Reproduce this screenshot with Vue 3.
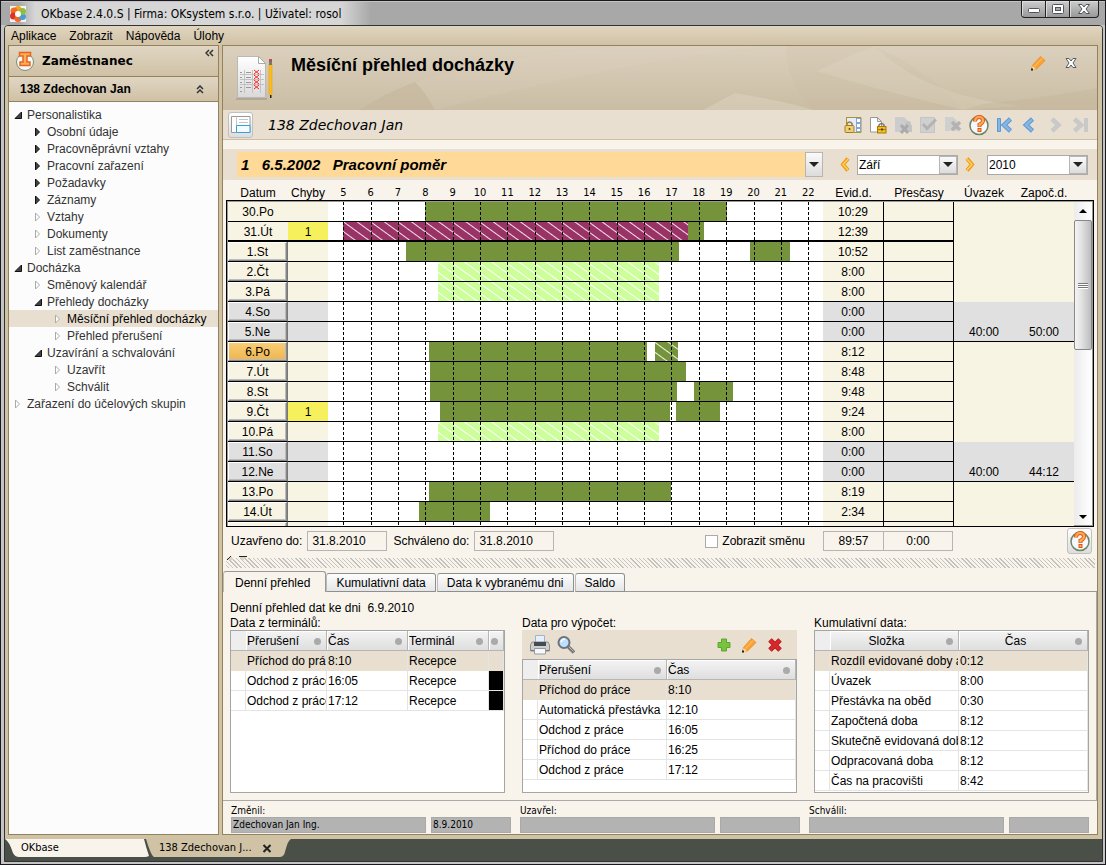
<script setup>
import { ref } from 'vue'

const menu = ['Aplikace', 'Zobrazit', 'Nápověda', 'Úlohy']

const tree = [
  { level: 0, state: 'open', label: 'Personalistika' },
  { level: 1, state: 'closed', label: 'Osobní údaje' },
  { level: 1, state: 'closed', label: 'Pracovněprávní vztahy' },
  { level: 1, state: 'closed', label: 'Pracovní zařazení' },
  { level: 1, state: 'closed', label: 'Požadavky' },
  { level: 1, state: 'closed', label: 'Záznamy' },
  { level: 1, state: 'leaf', label: 'Vztahy' },
  { level: 1, state: 'leaf', label: 'Dokumenty' },
  { level: 1, state: 'leaf', label: 'List zaměstnance' },
  { level: 0, state: 'open', label: 'Docházka' },
  { level: 1, state: 'leaf', label: 'Směnový kalendář' },
  { level: 1, state: 'open', label: 'Přehledy docházky' },
  { level: 2, state: 'leaf', label: 'Měsíční přehled docházky', selected: true },
  { level: 2, state: 'leaf', label: 'Přehled přerušení' },
  { level: 1, state: 'open', label: 'Uzavírání a schvalování' },
  { level: 2, state: 'leaf', label: 'Uzavřít' },
  { level: 2, state: 'leaf', label: 'Schválit' },
  { level: 0, state: 'leaf', label: 'Zařazení do účelových skupin' }
]

const hours = Array.from({ length: 18 }, (_, i) => i + 5)
const DAY_START = 4.44
const DAY_SPAN = 18.1
const at = (h) => ((h - DAY_START) / DAY_SPAN) * 100 + '%'
const span = (a, b) => ({ left: at(a), width: ((b - a) / DAY_SPAN) * 100 + '%' })

const days = [
  { d: '30.Po', t: '10:29', flat: true, bars: [['work', 7.99, 19.03]] },
  { d: '31.Út', t: '12:39', flat: true, err: '1', last: true, bars: [['trip', 5, 17.6], ['work', 17.6, 18.19]] },
  { d: '1.St', t: '10:52', bars: [['work', 7.29, 17.27], ['work', 19.87, 21.33]] },
  { d: '2.Čt', t: '8:00', bars: [['leave', 8.46, 16.54]] },
  { d: '3.Pá', t: '8:00', bars: [['leave', 8.46, 16.54]] },
  { d: '4.So', t: '0:00', off: true, bars: [] },
  { d: '5.Ne', t: '0:00', off: true, sum: ['40:00', '50:00'], bars: [] },
  { d: '6.Po', t: '8:12', current: true, bars: [['work', 8.13, 16.1], ['doctor', 16.4, 17.24]] },
  { d: '7.Út', t: '8:48', bars: [['work', 8.17, 17.53]] },
  { d: '8.St', t: '9:48', bars: [['work', 8.17, 17.2], ['work', 17.82, 19.25]] },
  { d: '9.Čt', t: '9:24', err: '1', bars: [['work', 8.54, 16.95], ['work', 17.16, 18.77]] },
  { d: '10.Pá', t: '8:00', bars: [['leave', 8.46, 16.54]] },
  { d: '11.So', t: '0:00', off: true, bars: [] },
  { d: '12.Ne', t: '0:00', off: true, sum: ['40:00', '44:12'], bars: [] },
  { d: '13.Po', t: '8:19', bars: [['work', 8.13, 16.98]] },
  { d: '14.Út', t: '2:34', bars: [['work', 7.77, 10.36]] },
  { d: '', t: '', bars: [] }
]

const tabs = ['Denní přehled', 'Kumulativní data', 'Data k vybranému dni', 'Saldo']
const activeTab = ref(0)

const terminals = [
  ['Příchod do práce', '8:10', 'Recepce'],
  ['Odchod z práce', '16:05', 'Recepce'],
  ['Odchod z práce', '17:12', 'Recepce']
]
const entries = [
  ['Příchod do práce', '8:10'],
  ['Automatická přestávka', '12:10'],
  ['Odchod z práce', '16:05'],
  ['Příchod do práce', '16:25'],
  ['Odchod z práce', '17:12']
]
const totals = [
  ['Rozdíl evidované doby a úvazku', '0:12'],
  ['Úvazek', '8:00'],
  ['Přestávka na oběd', '0:30'],
  ['Započtená doba', '8:12'],
  ['Skutečně evidovaná doba', '8:12'],
  ['Odpracovaná doba', '8:12'],
  ['Čas na pracovišti', '8:42']
]
const audit = [
  { id: 'changed', label: 'Změnil:', who: 'Zdechovan Jan Ing.', when: '8.9.2010' },
  { id: 'closed', label: 'Uzavřel:', who: '', when: '' },
  { id: 'approved', label: 'Schválil:', who: '', when: '' }
]
const contract = '1\u00a0\u00a0\u00a06.5.2002\u00a0\u00a0\u00a0Pracovní poměr'
</script>

<template>
  <div class="window">
    <header class="titlebar">
      <svg class="logo" width="18" height="18" viewBox="0 0 18 18">
        <rect x="1" y="1" width="16" height="16" fill="#f3f3f3" />
        <circle cx="9" cy="4.500" r="3.500" fill="#f9a01b" />
        <circle cx="5" cy="6" r="3.500" fill="#f26a28" />
        <circle cx="4.500" cy="11" r="3.500" fill="#d9342b" />
        <circle cx="9" cy="13.500" r="3.500" fill="#f26a22" />
        <circle cx="13.500" cy="11.500" r="3.500" fill="#4a9ad4" />
        <circle cx="13.500" cy="6.500" r="3.500" fill="#8cbf3f" />
        <circle cx="9" cy="9" r="3" fill="#fff" />
      </svg>
      <h1>OKbase 2.4.0.S | Firma: OKsystem s.r.o. | Uživatel: rosol</h1>
      <div class="winbtns">
        <button type="button" aria-label="Minimalizovat">
          <svg width="14" height="14" viewBox="0 0 14 14"><rect x="1.5" y="6.5" width="11" height="4" rx="1" fill="#fff" stroke="#50545c" /></svg>
        </button>
        <button type="button" aria-label="Maximalizovat">
          <svg width="14" height="14" viewBox="0 0 14 14"><rect x="1.5" y="2.5" width="11" height="9" rx="1" fill="#fff" stroke="#50545c" /><rect x="4.5" y="5.5" width="5" height="3" fill="#aaa" stroke="#50545c" /></svg>
        </button>
        <button type="button" class="wide" aria-label="Zavřít">
          <svg width="14" height="14" viewBox="0 0 14 14"><path d="M1.5 2.5h3.5l2 2.5 2-2.5h3.500l-3.500 4.500 3.500 4.500h-3.500l-2-2.500-2 2.500h-3.500l3.500-4.500z" fill="#fff" stroke="#50545c" /></svg>
        </button>
      </div>
    </header>

    <div class="client">
      <nav class="menubar"><a v-for="m in menu" :key="m" href="#">{{ m }}</a></nav>

      <div class="workspace">
        <aside class="sidebar">
          <div class="side-head">
            <svg width="20" height="20" viewBox="0 0 20 20">
              <circle cx="10" cy="11" r="8.500" fill="#f4f7fc" stroke="#7b8f6d" />
              <path d="M4.500 1.500h11v3.500h-3.500v6h3v3.500h-10v-3.500h3v-6h-3.500z" fill="#fdb05a" stroke="#e8641c" stroke-width="1.500" />
            </svg>
            <h2>Zaměstnanec</h2>
            <button type="button" aria-label="Skrýt panel">
              <svg width="9" height="8" viewBox="0 0 9 8"><path d="M4 1L1 4l3 3M8 1L5 4l3 3" fill="none" stroke="#333" stroke-width="1.500" /></svg>
            </button>
          </div>
          <div class="side-sub">
            <h3>138 Zdechovan Jan</h3>
            <button type="button" aria-label="Sbalit">
              <svg width="8" height="9" viewBox="0 0 8 9"><path d="M1 4l3-3 3 3M1 8l3-3 3 3" fill="none" stroke="#333" stroke-width="1.500" /></svg>
            </button>
          </div>
          <ul class="tree">
            <li v-for="n in tree" :key="n.label">
              <a href="#" :class="['lvl' + n.level, { selected: n.selected }]">
                <svg width="10" height="10" viewBox="0 0 10 10">
                  <path v-if="n.state === 'open'" d="M1 8.500h6.500v-6.500z" fill="#444" stroke="#111" />
                  <path v-else-if="n.state === 'closed'" d="M1.500 1v8l4-4z" fill="#444" stroke="#111" />
                  <path v-else d="M1.500 1v8l4-4z" fill="#fff" stroke="#aaa" />
                </svg>
                {{ n.label }}
              </a>
            </li>
          </ul>
        </aside>

        <main class="main">
          <div class="banner">
            <svg class="swirl" viewBox="0 0 874 64" preserveAspectRatio="none">
              <path d="M137 64Q160 48 192 36Q204 48 212 64z" fill="#c2b49a" opacity=".45" />
              <path d="M192 36Q300 4 420 0H540Q380 20 212 64Q204 48 192 36z" fill="#e6dac6" opacity=".15" />
              <path d="M564 0Q560 30 590 64H740Q700 20 650 0z" fill="#c2b49a" opacity=".12" />
              <path d="M594 25Q630 8 652 0Q700 50 800 60L740 64Q640 40 594 25z" fill="#e9decb" opacity=".22" />
              <path d="M512 47Q560 55 590 64H480z" fill="#e9decb" opacity=".35" />
              <path d="M760 58Q820 52 874 42V64H740z" fill="#b8a98c" opacity=".2" />
            </svg>
            <svg class="doc" width="38" height="48" viewBox="0 0 38 48">
              <defs><linearGradient id="paper" x1="0" y1="0" x2="0" y2="1"><stop offset="0" stop-color="#fff" /><stop offset="1" stop-color="#d9d9d9" /></linearGradient></defs>
              <path d="M1 44h31v2h-31z" fill="#9c8f78" opacity=".5" />
              <path d="M2.500 2.500h21l7 7v34h-28z" fill="url(#paper)" stroke="#b9b9b9" />
              <path d="M23.500 2.500v7h7z" fill="#fff" stroke="#aaa" />
              <path d="M9.500 16v23M17.500 16v23M25.500 16v23M5 20.500h24M5 25.500h24M5 30.500h24" stroke="#c2c2c2" fill="none" />
              <path d="M5 18.500h2M5 23.500h2M5 28.500h2M5 33.500h2M5 37.500h2M11 18.500h5M11 23.500h5M11 28.500h5M11 33.500h5" stroke="#999" fill="none" />
              <path d="M19 16l5 4M24 16l-5 4M19 21l5 4M24 21l-5 4M19 26l5 4M24 26l-5 4M19 31l5 4M24 31l-5 4" stroke="#f22" fill="none" />
              <path d="M34 10h3v29l-1.500 3-1.500-3z" fill="#fdbd1a" stroke="#e09a10" stroke-width=".5" />
              <path d="M34 8h3v3h-3z" fill="#777" /><path d="M34 5h3v3h-3z" fill="#a55" /><path d="M35 41h1.500v3h-1.500z" fill="#222" />
            </svg>
            <h2>Měsíční přehled docházky</h2>
            <div class="banner-actions">
              <button type="button" aria-label="Upravit">
                <svg width="16" height="16" viewBox="0 0 16 16"><path d="M2.500 10.500L10.500 1.500l4.500 4L6.500 14l-5 1z" fill="#fba233" stroke="#e88a22" stroke-width=".8" /><path d="M4.500 11.500L12 3.500" stroke="#ffc878" /><path d="M2.500 11l3.500 3-4.500 1.500z" fill="#f6d9a8" /><path d="M1 13.500h2v2h-2z" fill="#222" /></svg>
              </button>
              <button type="button" aria-label="Zavřít přehled">
                <svg width="12" height="12" viewBox="0 0 12 12"><path d="M1 1.500h3l2 2.500 2-2.500h3l-3 4.500 3 4.500h-3l-2-2.500-2 2.500h-3l3-4.500z" fill="#fff" stroke="#555b63" /></svg>
              </button>
            </div>
          </div>

          <div class="toolbar">
            <button type="button" class="frame-btn" aria-label="Rozložení">
              <svg width="20" height="18" viewBox="0 0 20 18"><path d="M.5 .5h18.500v16h-18.500z" fill="#fff" stroke="#999" /><path d="M5.500 .5v16M5.500 9.500h14M8 3.500h9M8 6.500h9M8 12.500h9" stroke="#c4c4c4" fill="none" /><path d="M5.500 9.500h13.500v7h-13.500z" fill="#f4faff" stroke="#2ea3dc" /></svg>
            </button>
            <span class="person">138 Zdechovan Jan</span>
            <div class="icons">
              <button type="button" aria-label="Zámek období">
                <svg width="18" height="18" viewBox="0 0 18 18"><path d="M2.500 1v7M2 1.500h15v15h-7" fill="#e4eefb" stroke="#aa9430" /><path d="M12 2h5v14h-5z" fill="#88a4d2" /><path d="M13 3h3v3h-3zM13 8h3v3h-3zM13 13h3v2h-3z" fill="#fff" /><path d="M3 9.500v-2q2.500-3 5 0v2" fill="none" stroke="#9a7d33" stroke-width="1.500" /><rect x="1" y="9.500" width="9" height="7" rx="1" fill="#f0cf74" stroke="#a17c28" /><circle cx="5.500" cy="13" r="1" fill="#6b5012" /></svg>
              </button>
              <button type="button" aria-label="Uzamknout">
                <svg width="18" height="18" viewBox="0 0 18 18"><path d="M1.500 1.500h7l4 4v10.500h-11z" fill="#fff" stroke="#999" /><path d="M8.500 1.500v4h4z" fill="#eee" stroke="#999" /><path d="M10 11V9q2.500-3 5 0v2" fill="none" stroke="#777" stroke-width="1.500" /><rect x="8.500" y="10.500" width="8.500" height="6.500" fill="#f5be17" stroke="#a8780c" /><path d="M9 13.500h8" stroke="#a8780c" /><path d="M12 12.500h2v2h-2z" fill="#444" /></svg>
              </button>
              <button type="button" disabled aria-label="Odemknout">
                <svg width="18" height="18" viewBox="0 0 18 18"><path d="M1 1h9l4 4v11h-13z" fill="#ccc" /><circle cx="14" cy="8" r="3" fill="#c4c4c4" /><rect x="10" y="9" width="8" height="7" fill="#c4c4c4" /><path d="M7 9l7 8M14 9l-7 8" stroke="#aaa" stroke-width="3" /></svg>
              </button>
              <button type="button" disabled aria-label="Schválit">
                <svg width="18" height="18" viewBox="0 0 18 18"><path d="M1.500 1.500h14v15h-14z" fill="#d0d0d0" stroke="#c4c4c4" /><path d="M4 8l4 4.500 9-9" fill="none" stroke="#b3b3b3" stroke-width="3" /></svg>
              </button>
              <button type="button" disabled aria-label="Zrušit schválení">
                <svg width="18" height="18" viewBox="0 0 18 18"><path d="M1 1h8l4 4v10h-12z" fill="#cfcfcf" /><path d="M8 6l8 8M16 6l-8 8" stroke="#b3b3b3" stroke-width="3.500" /></svg>
              </button>
              <button type="button" aria-label="Nápověda">
                <svg width="20" height="22" viewBox="0 0 20 22"><circle cx="10" cy="11.500" r="9" fill="#f5f8fd" stroke="#6d8661" stroke-width="1.500" /><path d="M6 7.500Q6 3 10 3Q14 3 14 6.500Q14 9 10.500 10.500V13" fill="none" stroke="#e2551a" stroke-width="4" /><path d="M6 7Q6.500 3 10 3Q14 3 14 6.500Q14 9 10.500 10.500V12.500" fill="none" stroke="#fdae4c" stroke-width="2.200" /><rect x="9" y="14.500" width="3" height="3" fill="#fdae4c" stroke="#e2551a" /></svg>
              </button>
              <button type="button" aria-label="První">
                <svg width="18" height="16" viewBox="0 0 18 16"><path d="M1.500 1.500h3v13h-3z" fill="#84b7e4" stroke="#5f97d2" /><path d="M14.500 2L8 8l6.500 6" fill="none" stroke="#5f97d2" stroke-width="4.500" /><path d="M14 2.500L8 8l6 5.500" fill="none" stroke="#84b7e4" stroke-width="2.500" /></svg>
              </button>
              <button type="button" aria-label="Předchozí">
                <svg width="18" height="16" viewBox="0 0 18 16"><path d="M11.500 2L5 8l6.500 6" fill="none" stroke="#5f97d2" stroke-width="4.500" /><path d="M11 2.500L5 8l6 5.500" fill="none" stroke="#84b7e4" stroke-width="2.500" /></svg>
              </button>
              <button type="button" disabled aria-label="Další">
                <svg width="18" height="16" viewBox="0 0 18 16"><path d="M6 2l6.500 6L6 14" fill="none" stroke="#c9c9c9" stroke-width="4.500" /></svg>
              </button>
              <button type="button" disabled aria-label="Poslední">
                <svg width="18" height="16" viewBox="0 0 18 16"><path d="M3.500 2l6.500 6-6.500 6" fill="none" stroke="#c9c9c9" stroke-width="4.500" /><path d="M13 1h4v14h-4z" fill="#c9c9c9" /></svg>
              </button>
            </div>
          </div>

          <div class="period">
            <div class="combo contract">
              <select aria-label="Pracovní poměr"><option>{{ contract }}</option></select>
              <span class="drop"><svg width="10" height="5" viewBox="0 0 10 5"><path d="M0 0h10l-5 5z" fill="#222" /></svg></span>
            </div>
            <button type="button" aria-label="Předchozí měsíc">
              <svg width="10" height="15" viewBox="0 0 10 15"><path d="M8 1.500L3 7.500l5 6" fill="none" stroke="#f09a18" stroke-width="4" /><path d="M8 2L3 7.500 8 13" fill="none" stroke="#ffd45c" stroke-width="1.500" /></svg>
            </button>
            <div class="combo small">
              <select aria-label="Měsíc"><option>Září</option></select>
              <span class="drop"><svg width="10" height="5" viewBox="0 0 10 5"><path d="M0 0h10l-5 5z" fill="#222" /></svg></span>
            </div>
            <button type="button" aria-label="Další měsíc">
              <svg width="10" height="15" viewBox="0 0 10 15"><path d="M2 1.500l5 6-5 6" fill="none" stroke="#f09a18" stroke-width="4" /><path d="M2 2l5 5.500L2 13" fill="none" stroke="#ffd45c" stroke-width="1.500" /></svg>
            </button>
            <div class="combo small year">
              <select aria-label="Rok"><option>2010</option></select>
              <span class="drop"><svg width="10" height="5" viewBox="0 0 10 5"><path d="M0 0h10l-5 5z" fill="#222" /></svg></span>
            </div>
          </div>

          <div class="chart">
            <table>
              <thead>
                <tr>
                  <th>Datum</th>
                  <th>Chyby</th>
                  <th class="scale"><span v-for="h in hours" :key="h" :style="{ left: at(h) }">{{ h }}</span></th>
                  <th>Evid.d.</th>
                  <th>Přesčasy</th>
                  <th>Úvazek</th>
                  <th>Započ.d.</th>
                </tr>
              </thead>
              <tbody>
                <tr v-for="(r, i) in days" :key="i" :class="{ off: r.off, sum: r.sum, last: r.last }">
                  <td :class="['date', { flat: r.flat }]">
                    <span v-if="r.flat">{{ r.d }}</span>
                    <button v-else type="button" :class="{ current: r.current }">{{ r.d }}</button>
                  </td>
                  <td :class="['err', { on: r.err }]">{{ r.err }}</td>
                  <td class="bars">
                    <i v-for="(b, k) in r.bars" :key="'b' + k" :class="b[0]" :style="span(b[1], b[2])"></i>
                    <i v-for="h in hours" :key="h" class="tick" :style="{ left: at(h) }"></i>
                  </td>
                  <td class="num">{{ r.t }}</td>
                  <td class="num"></td>
                  <td class="week">{{ r.sum ? r.sum[0] : '' }}</td>
                  <td class="week">{{ r.sum ? r.sum[1] : '' }}</td>
                </tr>
              </tbody>
            </table>
            <div class="scroll" aria-hidden="true">
              <svg width="18" height="18" viewBox="0 0 18 18"><path d="M9 7l4 4H5z" /></svg>
              <div class="thumb"><i></i><i></i><i></i></div>
              <svg class="down" width="18" height="18" viewBox="0 0 18 18"><path d="M9 12l4-4H5z" /></svg>
            </div>
          </div>

          <div class="status">
            <label for="closedTo">Uzavřeno do:</label>
            <input id="closedTo" value="31.8.2010" readonly />
            <label for="approvedTo">Schváleno do:</label>
            <input id="approvedTo" value="31.8.2010" readonly />
            <label class="check"><input type="checkbox" />Zobrazit směnu</label>
            <div class="sums">
              <input aria-label="Evidovaná doba" value="89:57" readonly />
              <input aria-label="Přesčasy celkem" value="0:00" readonly />
            </div>
            <button type="button" class="frame-btn" aria-label="Legenda">
              <svg width="20" height="22" viewBox="0 0 20 22"><circle cx="10" cy="11.500" r="9" fill="#f5f8fd" stroke="#6d8661" stroke-width="1.500" /><path d="M6 7.500Q6 3 10 3Q14 3 14 6.500Q14 9 10.500 10.500V13" fill="none" stroke="#e2551a" stroke-width="4" /><path d="M6 7Q6.500 3 10 3Q14 3 14 6.500Q14 9 10.500 10.500V12.500" fill="none" stroke="#fdae4c" stroke-width="2.200" /><rect x="9" y="14.500" width="3" height="3" fill="#fdae4c" stroke="#e2551a" /></svg>
            </button>
          </div>

          <div class="splitter">
            <svg width="22" height="5" viewBox="0 0 22 5"><path d="M0 4l4-4 3 4z" fill="#e0d4c0" /><path d="M0 4l4-4" stroke="#222" /><path d="M12 .5h8l-4 4z" fill="#e0d4c0" /><path d="M12 .5h8" stroke="#222" /></svg>
          </div>

          <div class="tabs" role="tablist">
            <button v-for="(t, i) in tabs" :key="t" type="button" role="tab" :aria-selected="i === activeTab" :class="{ active: i === activeTab }" @click="activeTab = i">{{ t }}</button>
            <span class="rest"></span>
          </div>

          <section class="detail">
            <p>Denní přehled dat ke dni&nbsp; 6.9.2010</p>
            <div class="lists">
              <div class="list">
                <h4>Data z terminálů:</h4>
                <div class="grid-box">
                  <table class="g4">
                    <thead><tr><th></th><th>Přerušení<b></b></th><th>Čas<b></b></th><th>Terminál<b></b></th><th><b></b></th></tr></thead>
                    <tbody>
                      <tr v-for="(r, i) in terminals" :key="i" :class="{ sel: i === 0 }">
                        <td></td><td v-for="c in r" :key="c">{{ c }}</td><td :class="{ black: i > 0 }"></td>
                      </tr>
                    </tbody>
                  </table>
                </div>
              </div>
              <div class="list">
                <h4>Data pro výpočet:</h4>
                <div class="list-tools">
                  <button type="button" aria-label="Tisk">
                    <svg width="20" height="20" viewBox="0 0 20 20"><path d="M5.500 .5h9v7h-9z" fill="#e4f0fd" stroke="#a3b4c8" /><path d="M2 7h16l1.500 3v6h-19v-6z" fill="#cfcfcf" stroke="#8f8f8f" /><path d="M4 7h12v4h-12z" fill="#454b52" /><path d="M1 15.500h18" stroke="#777" /><path d="M4.500 13.500h11v5.500h-11z" fill="#f4f9ff" stroke="#9a9a9a" /></svg>
                  </button>
                  <button type="button" aria-label="Hledat">
                    <svg width="18" height="20" viewBox="0 0 18 20"><path d="M11 11.500l6 6" stroke="#777" stroke-width="3.500" /><path d="M11.500 11.500l5 5" stroke="#bbb" /><circle cx="7" cy="7.500" r="5.500" fill="#bfe0fb" stroke="#6c737c" stroke-width="2" /><path d="M4 7q1-3 4-3" stroke="#fff" stroke-width="1.500" fill="none" /></svg>
                  </button>
                  <span class="gap"></span>
                  <button type="button" aria-label="Přidat">
                    <svg width="14" height="14" viewBox="0 0 14 14"><path d="M4.500 1h5v3.500h3.500v5h-3.500v3.500h-5v-3.500h-3.500v-5h3.500z" fill="#78c440" stroke="#5aa82a" /></svg>
                  </button>
                  <button type="button" aria-label="Změnit">
                    <svg width="16" height="16" viewBox="0 0 16 16"><path d="M2.500 10.500L10.500 1.500l4.500 4L6.500 14l-5 1z" fill="#fba233" stroke="#e88a22" stroke-width=".8" /><path d="M4.500 11.500L12 3.500" stroke="#ffc878" /><path d="M2.500 11l3.500 3-4.500 1.500z" fill="#f6d9a8" /><path d="M1 13.500h2v2h-2z" fill="#222" /></svg>
                  </button>
                  <button type="button" aria-label="Smazat">
                    <svg width="16" height="16" viewBox="0 0 16 16"><path d="M3 3l10 10M13 3l-10 10" stroke="#b01a1e" stroke-width="5" /><path d="M3 3l10 10M13 3l-10 10" stroke="#d8262b" stroke-width="3.500" /></svg>
                  </button>
                </div>
                <div class="grid-box">
                  <table class="g2">
                    <thead><tr><th></th><th>Přerušení<b></b></th><th>Čas<b></b></th></tr></thead>
                    <tbody>
                      <tr v-for="(r, i) in entries" :key="i" :class="{ sel: i === 0 }"><td></td><td v-for="c in r" :key="c">{{ c }}</td></tr>
                    </tbody>
                  </table>
                </div>
              </div>
              <div class="list">
                <h4>Kumulativní data:</h4>
                <div class="grid-box">
                  <table class="g2 centered">
                    <thead><tr><th></th><th>Složka<b></b></th><th>Čas<b></b></th></tr></thead>
                    <tbody>
                      <tr v-for="(r, i) in totals" :key="i" :class="{ sel: i === 0 }"><td></td><td v-for="c in r" :key="c">{{ c }}</td></tr>
                    </tbody>
                  </table>
                </div>
              </div>
            </div>
          </section>

          <footer class="audit">
            <div v-for="a in audit" :key="a.id">
              <label :for="a.id">{{ a.label }}</label>
              <input :id="a.id" class="who" :value="a.who" readonly />
              <input class="when" :aria-label="a.label + ' datum'" :value="a.when" readonly />
            </div>
          </footer>
        </main>
      </div>

      <div class="taskbar">
        <a href="#" class="task plain">
          <svg viewBox="0 0 145 18" preserveAspectRatio="none"><path d="M0 0h139q2 8 5 17q-2 1-4 1H14q-4 0-6-4Q4 2 0 0z" fill="#f8f4ec" /></svg>
          <span>OKbase</span>
        </a>
        <div class="task open">
          <svg viewBox="0 0 150 18" preserveAspectRatio="none"><path d="M0 0h150q-3 1-6 12q-1 6-6 6H8q-3-2-8-18z" fill="#d0c2a5" /></svg>
          <a href="#">138 Zdechovan J...</a>
          <button type="button" aria-label="Zavřít kartu"><svg width="10" height="9" viewBox="0 0 10 9"><path d="M1.500 1l7 7M8.500 1l-7 7" stroke="#222" stroke-width="2" /></svg></button>
        </div>
      </div>
    </div>
  </div>
</template>

<style>
body { margin: 0; background: #fff; }
</style>

<style scoped>
* { box-sizing: border-box; }
.window {
  height: 100vh; min-height: 860px; display: flex; flex-direction: column;
  padding: 1px 2px 2px 3px; border: 1px solid #1c1820; background: #c4c4c4;
  font: 12px/16px "Liberation Sans", Arial, sans-serif; color: #000;
}
h1, h2, h3, h4, p, ul { margin: 0; padding: 0; font-weight: normal; }
a { color: inherit; text-decoration: none; }
button { padding: 0; border: 0; background: none; font: inherit; color: inherit; display: flex; align-items: center; justify-content: center; }
input, select { font: inherit; color: inherit; margin: 0; border-radius: 0; }
table { border-spacing: 0; }
th, td { padding: 0; font-weight: normal; }
svg { flex: none; display: block; }

.titlebar { display: flex; height: 23px; margin: 0 -2px 0 -3px; padding-left: 8px; align-items: center; background: linear-gradient(90deg, #a8a8a8 0, #a8a8a8 18px, #d6d6d6 34px, #d6d6d6 340px, #a8a8a8 370px); }
.titlebar h1 { font: 12px/20px "DejaVu Sans Condensed", "DejaVu Sans", sans-serif; margin-left: 14px; flex: 1; }
.winbtns { display: flex; align-self: flex-start; margin: -1px 6px 0 0; border: 1px solid #222; border-top: 0; border-radius: 0 0 4px 4px; background: linear-gradient(#ccc, #999); overflow: hidden; }
.winbtns button { width: 24px; height: 16px; border-right: 1px solid #222; box-shadow: inset 1px 1px 0 #ddd; }
.winbtns button.wide { width: 28px; border-right: 0; }

.client { flex: 1; min-height: 0; display: flex; flex-direction: column; border: 1px solid #333; border-radius: 4px 4px 0 0; background: #d0c2a5; overflow: hidden; }
.menubar { display: flex; gap: 13px; height: 19px; padding: 2px 6px 0; background: linear-gradient(#e0d5c0, #d0c2a5); }
.workspace { flex: 1; min-height: 0; display: flex; gap: 3px; padding: 0 4px 4px 3px; }

.sidebar { width: 211px; flex: none; display: flex; flex-direction: column; border: 1px solid #94825f; background: #fcfcfc; }
.side-head { display: flex; height: 31px; padding-left: 6px; align-items: center; background: linear-gradient(#e0d6c3, #cfc1a5); border-bottom: 1px solid #94825f; }
.side-head h2 { flex: 1; margin-left: 7px; font: bold 12px/18px "DejaVu Sans", sans-serif; }
.side-head button { align-self: flex-start; margin: 3px 4px 0 0; }
.side-sub { display: flex; height: 25px; padding: 0 14px 0 11px; align-items: center; background: linear-gradient(#e0d6c3, #cfc1a5); border-bottom: 1px solid #94825f; }
.side-sub h3 { flex: 1; font-size: 12px; font-weight: bold; }
.tree { list-style: none; padding-top: 4px; }
.tree a { display: flex; align-items: center; gap: 3px; height: 17px; color: #333; white-space: nowrap; }
.tree .lvl0 { padding-left: 5px; }
.tree .lvl1 { padding-left: 25px; }
.tree .lvl2 { padding-left: 45px; }
.tree .selected { background: #e8dfd0; color: #000; }

.main { flex: 1; min-width: 0; display: flex; flex-direction: column; border: 1px solid #94825f; background: #f8f4ec; }
.banner { position: relative; display: flex; height: 64px; flex: none; padding: 8px 20px 0 12px; background: linear-gradient(#dbd0bd, #cabda4); }
.swirl { position: absolute; inset: 0; width: 100%; height: 100%; }
.banner .doc, .banner h2, .banner-actions { position: relative; }
.banner h2 { flex: 1; margin-left: 18px; font-size: 18px; font-weight: bold; line-height: 22px; }
.banner-actions { display: flex; gap: 19px; align-items: center; height: 18px; }
.toolbar { display: flex; align-items: center; height: 30px; flex: none; padding: 0 8px 0 5px; background: #e8dfd0; border-bottom: 1px solid #d0c0a2; }
.frame-btn { width: 25px; height: 26px; border: 1px solid #c0c0c0; border-radius: 3px; background: linear-gradient(#fff, #ddd); }
.person { flex: 1; margin-left: 15px; font: italic 14px/20px "DejaVu Sans", sans-serif; }
.icons { display: flex; align-items: center; gap: 7px; }
.period { display: flex; align-items: center; height: 31px; flex: none; margin-top: 9px; padding: 0 9px 0 14px; background: #e8dfd0; }
.combo { position: relative; display: flex; }
.combo select { appearance: none; flex: 1; min-width: 0; border: 0; outline: 0; }
.drop { position: absolute; right: 1px; top: 1px; bottom: 1px; width: 18px; display: flex; align-items: center; justify-content: center; border: 1px solid #b5b5b5; background: linear-gradient(#fafafa, #dcdcdc); pointer-events: none; }
.contract { flex: 1; height: 25px; margin-right: 17px; }
.contract select { background: #ffd997; padding: 0 18px 0 4px; font: italic bold 15px/24px "Liberation Sans", Arial, sans-serif; }
.contract .drop { right: 0; top: 0; bottom: 0; }
.small { width: 101px; height: 20px; margin: 0 7px; }
.small select { padding: 0 18px 0 1px; border: 1px solid #aaa; background: #fff; }
.year { margin: 0 0 0 12px; }

.chart { position: relative; flex: 1; min-height: 0; display: flex; padding: 0 3px; }
.chart table { flex: 1; min-width: 0; display: flex; flex-direction: column; }
.chart thead { display: block; padding: 0 20px 0 2px; }
.chart tbody { display: block; flex: 1; min-height: 0; overflow: hidden; border: 1px solid #000; box-shadow: inset 0 0 0 1px #999; padding: 1px 19px 1px 1px; background: #f8f4e3; }
.chart tr { display: grid; grid-template-columns: 60px 40px minmax(0, 1fr) 61px 70px 60px 60px; height: 20px; line-height: 20px; text-align: center; }
.chart thead tr { line-height: 26px; }
.chart th { height: 20px; }
.chart tbody td { border-bottom: 1px solid #000; background: #f8f4e3; height: 20px; }
.chart tbody td.week { border-bottom-color: transparent; }
.chart tbody tr.last td:not(.week) { border-bottom-width: 2px; }
.chart tbody tr.sum td.week { border-bottom-color: #000; }
.chart tbody tr.off td { background: #e0e0e0; }
.chart tbody td.num { border-right: 1px solid #000; }
.chart tbody td.date { border-right: 1px solid #777; }
.chart tbody td.flat { border-right: 0; }
.chart td.date button { width: 100%; height: 19px; border: 1px solid; border-color: #fff #888 #888 #fff; box-shadow: inset -1px -1px 0 #bbb; }
.chart td.date button.current { background: linear-gradient(#f9cc74, #edb750); }
.chart tbody td.err.on { background: #f5f05b; }
.scale { position: relative; }
.scale span { position: absolute; width: 20px; margin-left: -10px; font: 11px/26px "DejaVu Sans Condensed", "DejaVu Sans", sans-serif; }
.chart tbody tr td.bars { position: relative; background: #fff; }
.bars i { position: absolute; top: 0; bottom: 0; }
.bars .work { background: #75933b; }
.bars .doctor { background: repeating-linear-gradient(36deg, #75933b 0, #75933b 6px, #eef2e6 7px, #75933b 8px); }
.bars .trip { background: repeating-linear-gradient(36deg, #993366 0, #993366 6px, #f2e2ea 7px, #993366 8px); }
.bars .leave { background: repeating-linear-gradient(36deg, #ccff99 0, #ccff99 6px, #fff 7px, #ccff99 8px); }
.bars .tick { width: 1px; background: repeating-linear-gradient(#000 0, #000 3px, transparent 3px, transparent 5px); }
.scroll { position: absolute; right: 5px; top: 22px; bottom: 2px; width: 18px; display: flex; flex-direction: column; background: linear-gradient(90deg, #ececec, #fff); }
.thumb { height: 130px; display: flex; flex-direction: column; align-items: center; justify-content: center; gap: 1px; border: 1px solid #888; border-radius: 2px; background: linear-gradient(90deg, #f4f4f4 0, #e2e2e2 40%, #bdbdbd 100%); }
.thumb i { width: 10px; height: 1px; background: #777; box-shadow: 0 1px 0 #fff; }
.scroll .down { margin-top: auto; }

.status { display: flex; align-items: center; height: 28px; flex: none; padding: 0 5px 0 8px; }
.status input:not([type]) { width: 80px; height: 20px; padding: 0 4px; border: 1px solid #b5b5b5; background: #f8f4ec; }
.status label + input { margin: 0 6px 0 5px; }
.check { display: flex; align-items: center; gap: 4px; margin: 0 18px 0 auto; }
.check input { appearance: none; width: 13px; height: 13px; border: 1px solid #aaa; background: #fff; }
.sums { display: flex; margin-right: 114px; }
.sums input:not([type]) { width: 61px; text-align: center; }
.sums input + input:not([type]) { width: 70px; margin-left: -1px; }
.splitter { height: 12px; flex: none; margin: 1px 2px 0 3px; padding-left: 1px; background: repeating-linear-gradient(45deg, #c4c2bc 0, #c4c2bc 1px, #f8f4ec 1px, #f8f4ec 3px) 0 2px no-repeat; }

.tabs { display: flex; align-items: flex-end; height: 22px; flex: none; margin-top: 2px; }
.tabs button { height: 19px; padding: 0 9px; border: 1px solid #8f8f8f; border-left-color: #bbb; border-radius: 3px 3px 0 0; background: linear-gradient(#fdfdfd, #e6e6e6); margin-right: 1px; }
.tabs button.active { height: 21px; padding: 1px 15px 0 11px; border-color: #999; border-bottom: 0; border-left-color: #bbb; background: #f8f4ec; margin-right: 0; }
.tabs .rest { flex: 1; height: 1px; margin-left: -1px; background: #999; }
.detail { padding: 8px 7px 7px; border-bottom: 1px solid #aaa; border-right: 1px solid #aaa; }
.detail p { line-height: 16px; }
.lists { display: grid; grid-template-columns: repeat(3, minmax(0, 1fr)); gap: 17px; height: 177px; }
.list { display: flex; flex-direction: column; min-height: 0; }
.list h4 { font-size: 12px; line-height: 14px; }
.list-tools { display: flex; align-items: center; gap: 10px; height: 29px; flex: none; padding: 0 14px 0 8px; background: #e8dfd0; }
.list-tools button + button { margin-left: -3px; }
.list-tools .gap ~ button + button { margin-left: 0; }
.gap { flex: 1; }
.grid-box { flex: 1; min-height: 0; border: 1px solid #a5a5a5; background: #fff; overflow: hidden; }
.grid-box table, .grid-box thead, .grid-box tbody { display: block; }
.grid-box tr { display: grid; height: 20px; line-height: 20px; }
.g4 tr { grid-template-columns: 15px 1fr 1fr 1fr 15px; }
.g2 tr { grid-template-columns: 15px 1fr 1fr; }
.grid-box th { position: relative; height: 20px; overflow: hidden; text-align: left; padding-left: 1px; background: linear-gradient(#f4f4f4, #dedede); border-right: 1px solid #b5b5b5; border-bottom: 1px solid #b5b5b5; box-shadow: inset 1px 1px 0 #fff; line-height: 21px; }
.grid-box th:first-child { background: #eee; border-right: 0; box-shadow: none; }
.grid-box th b { position: absolute; right: 5px; top: 7px; width: 7px; height: 7px; border-radius: 50%; background: #aaa; }
.centered th { padding-right: 16px; text-align: center; }
.grid-box td { height: 20px; overflow: hidden; white-space: nowrap; padding-left: 1px; border-right: 1px solid #e4e4e4; border-bottom: 1px solid #e4e4e4; }
.grid-box .sel td { background: #e8dfd0; border-bottom-color: #e8dfd0; }
.grid-box td.black { background: #000; }

.audit { display: flex; gap: 9px; flex: none; padding: 4px 8px 1px; font: 10px/11px "DejaVu Sans Condensed", "DejaVu Sans", sans-serif; height: 33px; }
.audit div { flex: 1; display: grid; grid-template-columns: minmax(0, 195fr) minmax(0, 80fr); column-gap: 5px; }
.audit label { grid-column: 1 / 3; }
.audit input { min-width: 0; height: 16px; padding: 0 1px; border: 1px solid #a9a9a9; background: #b3b3b3; }

.taskbar { display: flex; height: 22px; flex: none; background: #4a4f47; font: 11px/18px "DejaVu Sans Condensed", "DejaVu Sans", sans-serif; }
.task { position: relative; display: flex; align-items: center; height: 18px; }
.task svg:not([width]) { position: absolute; inset: 0; width: 100%; height: 100%; }
.task span, .task a, .task button { position: relative; }
.task.plain { width: 145px; padding-left: 16px; }
.task.open { width: 145px; margin-left: -4px; padding-left: 13px; }
.task.open button { margin-left: 10px; }
</style>
